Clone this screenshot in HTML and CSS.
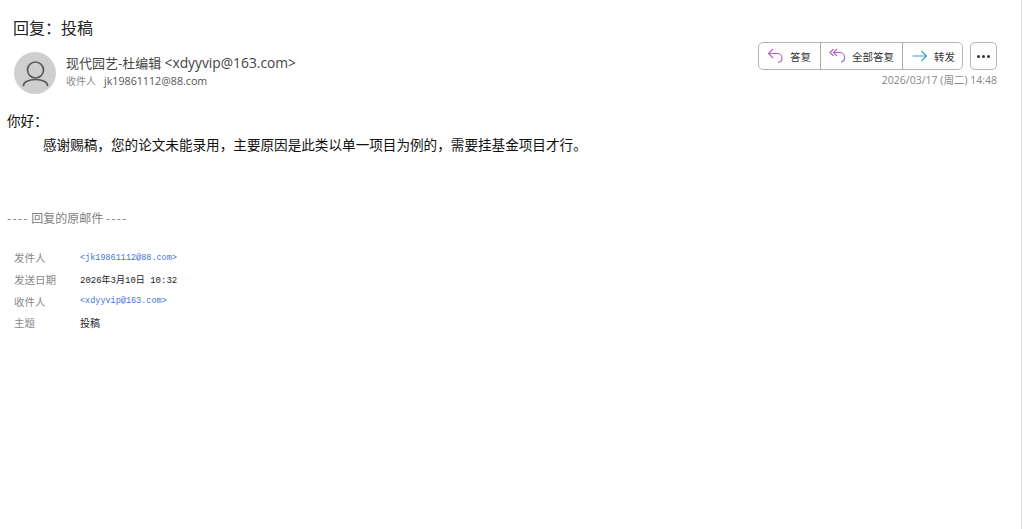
FILE: index.html
```html
<!DOCTYPE html>
<html lang="zh">
<head>
<meta charset="utf-8">
<title>回复&#xFF1A;投稿</title>
<link rel="stylesheet" href="styles.css">
</head>
<body>
<main class="mail">
  <h1 class="subject">回复&#xFF1A;投稿</h1>
  <header class="head">
    <div class="avatar">
      <svg width="42" height="42" viewBox="0 0 42 42" fill="none" stroke="#5a5a5a" stroke-width="1.700"><circle cx="21.500" cy="18" r="8"/><path d="M9.500 33.500c0-3.500 5-6 12-6s12 2.500 12 6" stroke-linecap="round"/></svg>
    </div>
    <div class="who">
      <div class="from">现代园艺-杜编辑 <span class="addr">&lt;xdyyvip@163.com&gt;</span></div>
      <div class="to"><span class="to-label">收件人</span><span class="to-addr">jk19861112@88.com</span></div>
    </div>
    <div class="side">
      <div class="actions">
        <div class="group">
          <button class="btn btn-reply"><svg width="18" height="18" viewBox="0 0 18 18" fill="none" stroke="#b565c4" stroke-width="1.200"><path d="M6 2 1.500 6.500 6 11M1.500 6.500H10.500a4.500 4.500 0 0 1 4.500 4.500 4.500 4.500 0 0 1-4 4.500"/></svg>答复</button>
          <button class="btn btn-all"><svg width="18" height="18" viewBox="0 0 18 18" fill="none" stroke="#b565c4" stroke-width="1.200"><path d="M4.500 2 1 5.500 4.500 9M8 2 4.500 5.500 8 9M4.500 5.500H11a4.500 4.500 0 0 1 4.500 4.500 4.500 4.500 0 0 1-3.500 5"/></svg>全部答复</button>
          <button class="btn btn-fwd"><svg width="18" height="18" viewBox="0 0 18 18" fill="none" stroke="#3f9bd8" stroke-width="1.200"><path d="M1.500 9h14M10.500 4l5 5-5 5"/></svg>转发</button>
        </div>
        <button class="more"><span></span><span></span><span></span></button>
      </div>
      <div class="date">2026/03/17 (周二) 14:48</div>
    </div>
  </header>
  <section class="body">
    <p class="greet">你好&#xFF1A;</p>
    <p class="text">感谢赐稿&#xFF0C;您的论文未能录用&#xFF0C;主要原因是此类以单一项目为例的&#xFF0C;需要挂基金项目才行&#x3002;</p>
    <p class="sep"><span class="dash">----</span> 回复的原邮件 <span class="dash">----</span></p>
    <dl class="meta">
      <dt>发件人</dt><dd class="link">&lt;jk19861112@88.com&gt;</dd>
      <dt>发送日期</dt><dd class="sent">2026年3月10日 10:32</dd>
      <dt>收件人</dt><dd class="link">&lt;xdyyvip@163.com&gt;</dd>
      <dt>主题</dt><dd class="plain">投稿</dd>
    </dl>
  </section>
</main>
</body>
</html>
```
FILE: styles.css
```css
* { box-sizing: border-box; }
html, body { margin: 0; height: 100%; overflow: hidden; background: #fff; }
body { font-family: "Open Sans", "Noto Sans CJK SC", sans-serif; color: #1a1a1a; }
.mail { width: 1022px; height: 529px; border-right: 1px solid #e2e2e2; padding: 17px 24px 0 7px; }
.subject { margin: 0 0 0 6px; font-size: 16px; font-weight: 400; line-height: 22px; color: #222; }
.head { display: flex; margin: 2px 0 0 7px; height: 54px; }
.avatar { width: 42px; height: 42px; margin-top: 11px; border-radius: 50%; background: #cfcfcf; flex: none; }
.avatar svg { display: block; }
.who { margin: 13px 0 0 10px; flex: 1; }
.from { font-size: 13px; line-height: 18px; color: #444; }
.addr { font-size: 13.800px; }
.to { display: flex; gap: 8px; margin-top: 1px; font-size: 10px; line-height: 16px; color: #555; }
.to-label { color: #888; }
.to-addr { font-size: 10.700px; }
.side { display: flex; flex-direction: column; align-items: flex-end; margin-top: 1px; }
.actions { display: flex; gap: 7px; }
.group { display: flex; height: 28px; border: 1px solid #b5b5b5; border-radius: 5px; }
.btn { display: flex; align-items: center; gap: 5px; padding: 0 9px 0 8px; border: 0; border-right: 1px solid #aaa; background: transparent; font: 10.500px "Noto Sans CJK SC", sans-serif; color: #333; }
.btn-all { padding-right: 8px; }
.btn-fwd { border-right: 0; padding-right: 7px; }
.more { display: flex; align-items: center; justify-content: center; gap: 2px; width: 27px; height: 28px; padding: 0; border: 1px solid #b5b5b5; border-radius: 5px; background: #fff; }
.more span { width: 3px; height: 3px; border-radius: 50%; background: #333; }
.date { margin-top: 3px; font-size: 10.500px; line-height: 14px; color: #888; }
.greet { margin: 14px 0 0; font-size: 13.600px; line-height: 22px; color: #111; font-family: "Noto Sans CJK SC", sans-serif; }
.text { margin: 2px 0 0 36px; font-size: 13.600px; line-height: 22px; color: #111; font-family: "Noto Sans CJK SC", sans-serif; }
.sep { margin: 54px 0 0; font-size: 12px; line-height: 18px; color: #808080; font-family: "Noto Sans CJK SC", sans-serif; }
.dash { letter-spacing: 1.250px; }
.meta { display: grid; grid-template-columns: 66px 1fr; grid-auto-rows: 21.700px; align-items: center; margin: 20px 0 0 7px; font-size: 10px; font-family: "Liberation Mono", "Noto Sans CJK SC", monospace; }
.meta dt { color: #888; font-size: 10.500px; font-family: "Noto Sans CJK SC", sans-serif; }
.meta dd { margin: 0; color: #222; font-size: 8.500px; }
.meta .link { color: #3f74dd; }
.meta .sent { font-size: 9px; font-weight: 400; }
.meta .plain { font-size: 10px; }
```
